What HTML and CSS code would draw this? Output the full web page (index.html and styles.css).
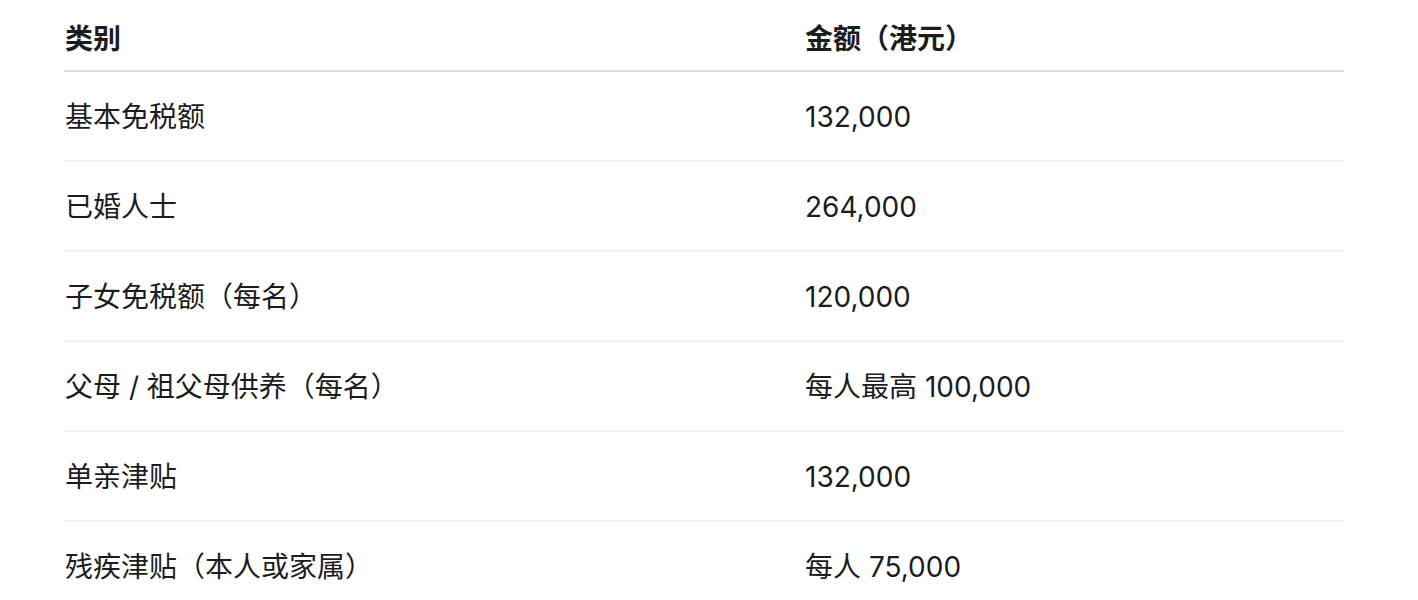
FILE: index.html
```html
<!DOCTYPE html>
<html lang="zh-Hans">
<head>
<meta charset="utf-8">
<title>免税额</title>
<link rel="stylesheet" href="styles.css">
</head>
<body>
<div class="wrap">
<table class="allow">
<thead>
<tr><th class="col-cat">类别</th><th>金额（港元）</th></tr>
</thead>
<tbody>
<tr><td>基本免税额</td><td>132,000</td></tr>
<tr><td>已婚人士</td><td>264,000</td></tr>
<tr><td>子女免税额（每名）</td><td>120,000</td></tr>
<tr><td>父母 / 祖父母供养（每名）</td><td>每人最高 100,000</td></tr>
<tr><td>单亲津贴</td><td>132,000</td></tr>
<tr><td>残疾津贴（本人或家属）</td><td>每人 75,000</td></tr>
</tbody>
</table>
</div>
</body>
</html>
```
FILE: styles.css
```css
html, body {
  margin: 0;
  padding: 0;
  background: #ffffff;
}
body {
  font-family: Inter, "Noto Sans CJK SC", sans-serif;
  color: #1c1c1e;
  font-size: 28px;
}
.wrap {
  padding: 0 74px 0 64px;
}
.allow {
  width: 1280px;
  border-collapse: separate;
  border-spacing: 0;
  table-layout: fixed;
}
.allow th {
  text-align: left;
  font-weight: 700;
  box-sizing: content-box;
  height: 61px;
  padding: 9px 0 0 1px;
  vertical-align: middle;
  border-bottom: 2px solid #dcdcdc;
  line-height: 1.2;
}
.allow .col-cat {
  width: 739px;
}
.allow td {
  box-sizing: content-box;
  height: 84px;
  padding: 4px 0 0 1px;
  vertical-align: middle;
  border-bottom: 2px solid #f0f0f0;
  line-height: 1.2;
  font-weight: 400;
}
.allow tbody tr:last-child td {
  border-bottom: none;
}
```
